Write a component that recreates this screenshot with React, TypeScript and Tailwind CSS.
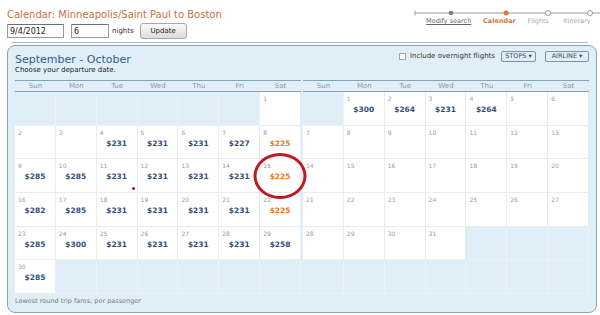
import React from 'react';

type Day = { d: number; p?: string; hot?: boolean } | null;

const dayNames = ['Sun', 'Mon', 'Tue', 'Wed', 'Thu', 'Fri', 'Sat'];

const september: Day[][] = [
  [null, null, null, null, null, null, { d: 1 }],
  [{ d: 2 }, { d: 3 }, { d: 4, p: '$231' }, { d: 5, p: '$231' }, { d: 6, p: '$231' }, { d: 7, p: '$227' }, { d: 8, p: '$225', hot: true }],
  [{ d: 9, p: '$285' }, { d: 10, p: '$285' }, { d: 11, p: '$231' }, { d: 12, p: '$231' }, { d: 13, p: '$231' }, { d: 14, p: '$231' }, { d: 15, p: '$225', hot: true }],
  [{ d: 16, p: '$282' }, { d: 17, p: '$285' }, { d: 18, p: '$231' }, { d: 19, p: '$231' }, { d: 20, p: '$231' }, { d: 21, p: '$231' }, { d: 22, p: '$225', hot: true }],
  [{ d: 23, p: '$285' }, { d: 24, p: '$300' }, { d: 25, p: '$231' }, { d: 26, p: '$231' }, { d: 27, p: '$231' }, { d: 28, p: '$231' }, { d: 29, p: '$258' }],
  [{ d: 30, p: '$285' }, null, null, null, null, null, null],
];

const october: Day[][] = [
  [null, { d: 1, p: '$300' }, { d: 2, p: '$264' }, { d: 3, p: '$231' }, { d: 4, p: '$264' }, { d: 5 }, { d: 6 }],
  [{ d: 7 }, { d: 8 }, { d: 9 }, { d: 10 }, { d: 11 }, { d: 12 }, { d: 13 }],
  [{ d: 14 }, { d: 15 }, { d: 16 }, { d: 17 }, { d: 18 }, { d: 19 }, { d: 20 }],
  [{ d: 21 }, { d: 22 }, { d: 23 }, { d: 24 }, { d: 25 }, { d: 26 }, { d: 27 }],
  [{ d: 28 }, { d: 29 }, { d: 30 }, { d: 31 }, null, null, null],
  [null, null, null, null, null, null, null],
];

const Cell = ({ day, circled, marked }: { day: Day; circled?: boolean; marked?: boolean }) => {
  if (!day) {
    return <div className="border-r border-b border-[#e9f3f8]" />;
  }
  return (
    <div className="relative bg-white border-r border-b border-[#e6edf1]">
      <div className="pl-[3px] pt-[3px] text-[6px] leading-[7px] text-[#9a9a9a]">{day.d}</div>
      {day.p && (
        <div
          className={
            'mt-[3px] text-center text-[7.5px] leading-[9px] font-bold ' +
            (day.hot ? 'text-[#e27a2c]' : 'text-[#34507a]')
          }
        >
          {day.p}
        </div>
      )}
      {circled && (
        <div className="absolute left-1/2 top-1/2 z-10 h-[46px] w-[53px] -translate-x-1/2 -translate-y-1/2 rounded-[50%] border-[3px] border-[#c01822]" />
      )}
      {marked && <div className="absolute right-[2px] bottom-[2px] z-10 h-[3px] w-[3px] rounded-full bg-[#b3121d]" />}
    </div>
  );
};

const Month = ({ rows, left }: { rows: Day[][]; left?: boolean }) => (
  <div className="w-[286px]">
    <div className="grid h-[12px] grid-cols-7 border-t border-b border-[#86a4b8]">
      {dayNames.map((n) => (
        <div key={n} className="text-center text-[7px] leading-[10px] text-[#8797a6]">
          {n}
        </div>
      ))}
    </div>
    <div className="grid h-[202px] grid-cols-7 grid-rows-6">
      {rows.map((row, r) =>
        row.map((day, c) => (
          <Cell
            key={r + '-' + c}
            day={day}
            circled={left && r === 2 && c === 6}
            marked={left && r === 2 && c === 2}
          />
        ))
      )}
    </div>
  </div>
);

const Stepper = () => (
  <div className="mt-[9px] w-[187px]">
    <svg width="187" height="8" viewBox="0 0 187 8" className="block">
      <line x1="2" y1="4" x2="187" y2="4" stroke="#9a9a9a" strokeWidth="1" />
      <line x1="2" y1="1.5" x2="2" y2="6.5" stroke="#9a9a9a" strokeWidth="1" />
      <circle cx="38" cy="4" r="2.3" fill="#7d7d7d" />
      <circle cx="93" cy="4" r="2.5" fill="#d9783a" />
      <circle cx="135" cy="4" r="2.5" fill="#fff" stroke="#9a9a9a" strokeWidth="1" />
      <circle cx="177" cy="4" r="2.5" fill="#fff" stroke="#9a9a9a" strokeWidth="1" />
    </svg>
    <div className="flex pl-[8px] text-[6.5px] leading-[8px]">
      <div className="w-[60px] text-center text-[#666] underline">Modify search</div>
      <div className="w-[50px] text-center font-bold text-[#d9783a]">Calendar</div>
      <div className="w-[34px] text-center text-[#aaa]">Flights</div>
      <div className="w-[50px] whitespace-nowrap text-center text-[#aaa]">Itinerary</div>
    </div>
  </div>
);

export default function App() {
  return (
    <div className="h-[315px] w-[600px] overflow-hidden bg-white font-['DejaVu_Sans',sans-serif]">
      <div className="flex h-[42px] justify-between pl-[7px]">
        <div>
          <div className="mt-[9px] text-[10px] leading-[12px] text-[#c9703f]">
            Calendar: Minneapolis/Saint Paul to Boston
          </div>
          <div className="mt-[2px] flex items-center">
            <input
              defaultValue="9/4/2012"
              className="h-[14px] w-[57px] border border-[#9a9a9a] border-t-[#6f6f6f] px-[2px] text-[8px] text-[#222] outline-none"
            />
            <input
              defaultValue="6"
              className="ml-[7px] h-[14px] w-[38px] border border-[#9a9a9a] border-t-[#6f6f6f] px-[2px] text-[8px] text-[#222] outline-none"
            />
            <span className="ml-[3px] text-[7px] text-[#333]">nights</span>
            <button className="ml-[6px] h-[16px] w-[47px] rounded-[3px] border border-[#a9a9a9] bg-gradient-to-b from-[#fafafa] to-[#dcdcdc] text-[7px] text-[#222]">
              Update
            </button>
          </div>
        </div>
        <Stepper />
      </div>
      <div className="mx-[12px] border-t border-[#a6bfcc]" />
      <div className="ml-[7px] mt-[2px] h-[268px] w-[590px] rounded-[8px] border border-[#8ea3b2] bg-[#e0eff7] px-[7px]">
        <div className="flex h-[34px] justify-between">
          <div>
            <div className="mt-[7px] text-[11px] leading-[13px] text-[#2e5e8c]">September - October</div>
            <div className="text-[7px] leading-[9px] text-[#222]">Choose your departure date.</div>
          </div>
          <div className="mt-[5px] flex h-[11px] items-center">
            <span className="h-[7px] w-[7px] border border-[#9aa7b0] bg-white" />
            <span className="ml-[4px] text-[7px] text-[#333]">Include overnight flights</span>
            <span className="ml-[6px] flex h-[11px] w-[35px] items-center justify-center rounded-[2px] border border-[#7d93a3] text-[6.5px] text-[#3b4f63]">
              STOPS ▾
            </span>
            <span className="ml-[9px] flex h-[11px] w-[44px] items-center justify-center rounded-[2px] border border-[#7d93a3] text-[6.5px] text-[#3b4f63]">
              AIRLINE ▾
            </span>
          </div>
        </div>
        <div className="flex gap-[2px]">
          <Month rows={september} left />
          <Month rows={october} />
        </div>
        <div className="mt-[3px] text-[6.5px] leading-[8px] text-[#7a7a7a]">Lowest round trip fares, per passenger</div>
      </div>
    </div>
  );
}
